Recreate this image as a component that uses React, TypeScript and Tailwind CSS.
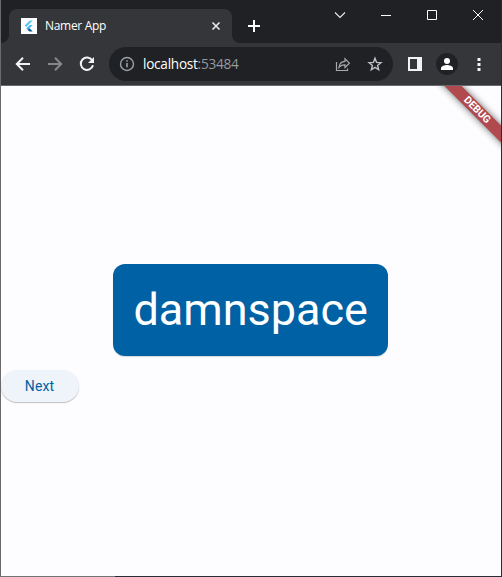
import type { ReactNode } from "react";

function Icon({ size = 24, className = "", children }: { size?: number; className?: string; children: ReactNode }) {
  return (
    <svg width={size} height={size} viewBox={`0 0 ${size} ${size}`} fill="none" className={`block shrink-0 ${className}`}>
      {children}
    </svg>
  );
}

function FlutterLogo() {
  return (
    <Icon size={16} className="bg-white">
      <path d="M8.8 2.4h2.9L5.2 8.9 3.7 7.4z" fill="#54c5f8" />
      <path d="M8.8 7.1h2.9L8.4 10.3l-1.7 1.6-1.5-1.5z" fill="#40b8f5" />
      <path d="M6.7 11.9l1.7-1.6 3.3 3.3H8.5z" fill="#01579b" />
    </Icon>
  );
}

function TabStrip() {
  return (
    <div className="flex h-[43px] bg-[#202124]">
      <div className="flex w-2 shrink-0 items-end">
        <Icon size={8}><path d="M8 0v8H0a8 8 0 0 0 8-8z" fill="#35363a" /></Icon>
      </div>
      <div className="mt-[9px] flex h-[34px] w-[223px] shrink-0 items-center rounded-t-lg bg-[#35363a] pl-3">
        <FlutterLogo />
        <span className="ml-2 w-[166px] whitespace-nowrap font-['Open_Sans','Noto_Sans',sans-serif] text-[12px] leading-4 tracking-[-0.3px] text-white">Namer App</span>
        <Icon size={10}><path d="M1.5 1.5l7 7m0-7l-7 7" stroke="#e8eaed" strokeWidth="1.6" /></Icon>
      </div>
      <div className="flex w-2 shrink-0 items-end">
        <Icon size={8}><path d="M0 0v8h8a8 8 0 0 1-8-8z" fill="#35363a" /></Icon>
      </div>
      <Icon size={14} className="ml-[7px] mt-[19px]"><path d="M7 1v12M1 7h12" stroke="#fff" strokeWidth="2" /></Icon>
      <div className="ml-auto flex gap-[34px] pr-[17px] pt-[9px]">
        <Icon size={12}><path d="M1 3.5l5 5 5-5" stroke="#e8eaed" strokeWidth="1.1" /></Icon>
        <Icon size={12}><path d="M1 6.5h10" stroke="#fff" /></Icon>
        <Icon size={12}><path d="M1.5 1.5h9v9h-9z" stroke="#fff" /></Icon>
        <Icon size={12}><path d="M1 1l10 10m0-10L1 11" stroke="#fff" /></Icon>
      </div>
    </div>
  );
}

function Toolbar() {
  return (
    <div className="flex h-[43px] items-center border-b border-[#68696b] bg-[#35363a] pl-[14px]">
      <Icon size={16}><path d="M15 8H2M8 1.8L1.8 8 8 14.2" stroke="#f1f3f4" strokeWidth="2" /></Icon>
      <Icon size={16} className="ml-4"><path d="M1 8h13M8 1.8L14.2 8 8 14.2" stroke="#85878a" strokeWidth="2" /></Icon>
      <Icon size={16} className="ml-4"><path d="M13.2 4.3A6.2 6.2 0 1 0 14 9.3" stroke="#f1f3f4" strokeWidth="2" /><path d="M15 1v6H9z" fill="#f1f3f4" /></Icon>
      <div className="ml-[14px] flex h-[34px] w-[284px] items-center rounded-full bg-[#202124] pl-[10px]">
        <Icon size={16}><circle cx="8" cy="8" r="6.5" stroke="#9aa0a6" strokeWidth="1.4" /><path d="M8 7v4.3M8 4.2v1.6" stroke="#9aa0a6" strokeWidth="1.6" /></Icon>
        <span className="ml-2 w-[192px] whitespace-nowrap font-['Open_Sans','Noto_Sans',sans-serif] text-[13.6px] leading-5 tracking-[-0.26px] text-white">localhost<span className="text-[#96999d]">:53484</span></span>
        <Icon size={16}><path d="M1.5 6v8.5h11v-2M4 11.4c.4-4 2.4-5.9 6-6V2.8l4.4 4.4L10 11.5V8.8C7.2 8.7 5.4 9.5 4 11.4z" stroke="#a7a9ac" strokeWidth="1.2" /></Icon>
        <Icon size={16} className="ml-4"><path d="M8 2.3l1.6 4.1 4.4.3-3.4 2.8 1.1 4.3L8 11.4l-3.7 2.4 1.1-4.3L2 6.7l4.4-.3z" stroke="#bdc1c6" strokeWidth="1.4" /></Icon>
      </div>
      <Icon size={14} className="ml-[15px]"><path fillRule="evenodd" d="M0 0h14v14H0zM2 2v10h7V2z" fill="#f1f3f4" /></Icon>
      <span className="ml-[14px] flex h-[22px] w-[22px] items-center justify-center rounded-full bg-[#202124]">
        <Icon size={14}><circle cx="7" cy="4" r="3" fill="#fff" /><path d="M1 13v-1.8C1 9 5 8 7 8s6 1 6 3.2V13z" fill="#fff" /></Icon>
      </span>
      <Icon size={16} className="ml-[13px]"><path d="M6.5 2h3v3h-3zM6.5 7h3v3h-3zM6.5 12h3v3h-3z" fill="#f1f3f4" /></Icon>
    </div>
  );
}

function DebugBanner() {
  return (
    <div className="absolute right-[-36px] top-[18px] flex h-3 w-[120px] rotate-45 items-center justify-center bg-[#b14a4e] font-[Roboto,sans-serif] text-[10.4px] font-bold leading-3 text-white shadow-[0_0_7px_rgba(0,0,0,0.6)]">
      DEBUG
    </div>
  );
}

export default function App() {
  return (
    <div className="flex h-[577px] w-[502px] flex-col overflow-hidden bg-[#fdfcff]">
      <div className="flex min-h-0 flex-1 flex-col border-x border-l-[#6b6b6d] border-r-[#292d35]">
        <TabStrip />
        <Toolbar />
        <main className="relative flex flex-1 flex-col overflow-hidden pt-[178px]">
          <div className="ml-[112px] flex h-[92px] w-[275.4px] items-center justify-center rounded-xl bg-[#0061a4] font-[Roboto,sans-serif] text-[45px] leading-[52px] text-white shadow-[0_1px_1px_rgba(0,0,0,0.15)]">
            damnspace
          </div>
          <button className="mt-[14px] h-8 w-[78px] rounded-full bg-[#eff3fa] pr-px font-[Roboto,sans-serif] text-sm leading-5 tracking-[0.1px] text-[#0061a4] shadow-[0_1px_1px_rgba(0,0,0,0.25)]">
            Next
          </button>
          <DebugBanner />
        </main>
      </div>
      <div className="flex h-px shrink-0 bg-[#292d35]">
        <div className="h-px w-[115px] bg-[#737375]" />
      </div>
    </div>
  );
}
